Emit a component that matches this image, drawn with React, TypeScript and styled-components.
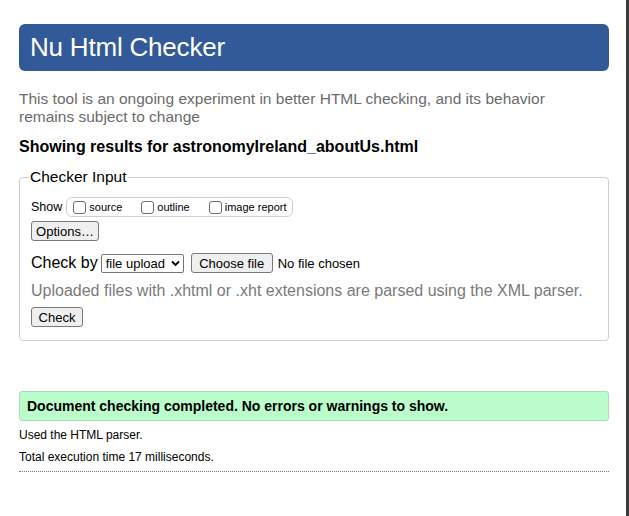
import React from "react";
import styled, { createGlobalStyle } from "styled-components";

const Global = createGlobalStyle`
  html, body { margin: 0; padding: 0; background: #fff; }
  body { font-family: "Liberation Sans", Arial, sans-serif; color: #000; }
`;

const Page = styled.div`
  box-sizing: border-box;
  width: 629px;
  min-height: 516px;
  padding: 24px 20px 0 19px;
  border-right: 3px solid #3a3a3a;
  font-family: "Liberation Sans", Arial, sans-serif;
`;

const Content = styled.div`
  width: 590px;
`;

const Header = styled.h1`
  margin: 0;
  height: 47px;
  box-sizing: border-box;
  background: #335a98;
  border-radius: 6px;
  color: #fff;
  font-weight: normal;
  font-size: 26px;
  line-height: 47px;
  padding-left: 11px;
  letter-spacing: -0.2px;
`;

const Intro = styled.p`
  margin: 19px 0 0;
  max-width: 560px;
  color: #6b6b6b;
  font-size: 15.5px;
  line-height: 18px;
`;

const ResultsFor = styled.h2`
  margin: 12px 0 0;
  font-size: 16px;
  line-height: 18px;
  font-weight: bold;
`;

const Fieldset = styled.fieldset`
  margin: 12px 0 0;
  padding: 4px 11px 13px 11px;
  border: 1px solid #cfcfcf;
  border-radius: 4px;
`;

const Legend = styled.legend`
  font-size: 15.5px;
  padding: 0 1px;
  margin-left: -2px;
`;

const ShowRow = styled.div`
  display: flex;
  align-items: center;
  font-size: 12.5px;
  gap: 4px;
  margin-top: 7px;
`;

const ShowGroup = styled.div`
  display: flex;
  align-items: center;
  border: 1px solid #cfcfcf;
  border-radius: 6px;
  height: 18px;
  padding: 0 5px 0 6px;
  gap: 19px;
  font-size: 11px;
`;

const CheckLabel = styled.label`
  display: flex;
  align-items: center;
  gap: 3px;
`;

const Box = styled.span`
  display: inline-block;
  width: 11px;
  height: 11px;
  border: 1px solid #6d6d6d;
  border-radius: 3px;
  background: #fff;
`;

const Button = styled.button<{ $w?: number }>`
  font-family: "Liberation Sans", Arial, sans-serif;
  font-size: 13px;
  height: 20px;
  ${(p) => (p.$w ? `width: ${p.$w}px;` : "")}
  padding: 0 3px;
  background: #efefef;
  border: 1px solid #7a7a7a;
  border-radius: 3px;
  color: #000;
  line-height: 1;
`;

const OptionsRow = styled.div`
  margin-top: 4px;
`;

const CheckByRow = styled.div`
  display: flex;
  align-items: center;
  margin-top: 12px;
  font-size: 16px;
`;

const Select = styled.div`
  display: flex;
  align-items: center;
  justify-content: space-between;
  margin-left: 3px;
  width: 83px;
  height: 19px;
  box-sizing: border-box;
  border: 1px solid #767676;
  border-radius: 2px;
  font-size: 13px;
  padding: 0 3px 0 4px;
`;

const FileButton = styled(Button)`
  margin-left: 7px;
  width: 82px;
`;

const NoFile = styled.span`
  font-size: 13px;
  margin-left: 5px;
`;

const Note = styled.p`
  margin: 8px 0 0;
  color: #7a7a7a;
  font-size: 16px;
  line-height: 19px;
`;

const CheckRow = styled.div`
  margin-top: 7px;
`;

const Success = styled.p`
  margin: 50px 0 0;
  height: 30px;
  box-sizing: border-box;
  background: #bbfdca;
  border: 1px solid #a8dcb4;
  border-radius: 3px;
  font-weight: bold;
  font-size: 14px;
  line-height: 28px;
  padding-left: 7px;
`;

const Small = styled.p<{ $mt: number }>`
  margin: ${(p) => p.$mt}px 0 0;
  font-size: 12px;
  line-height: 14px;
`;

const Divider = styled.hr`
  margin: 7px 0 0;
  border: 0;
  border-top: 1px dotted #777;
  height: 0;
`;

const Chevron = () => (
  <svg width="9" height="7" viewBox="0 0 9 7">
    <path d="M1 1.5 L4.5 5 L8 1.5" fill="none" stroke="#000" strokeWidth="1.8" />
  </svg>
);

export default function App() {
  return (
    <>
      <Global />
      <Page>
        <Content>
          <Header>Nu Html Checker</Header>
          <Intro>
            This tool is an ongoing experiment in better HTML checking, and its behavior
            remains subject to change
          </Intro>
          <ResultsFor>Showing results for astronomyIreland_aboutUs.html</ResultsFor>
          <Fieldset>
            <Legend>Checker Input</Legend>
            <ShowRow>
              Show
              <ShowGroup>
                <CheckLabel>
                  <Box />
                  source
                </CheckLabel>
                <CheckLabel>
                  <Box />
                  outline
                </CheckLabel>
                <CheckLabel>
                  <Box />
                  image report
                </CheckLabel>
              </ShowGroup>
            </ShowRow>
            <OptionsRow>
              <Button $w={68}>Options…</Button>
            </OptionsRow>
            <CheckByRow>
              Check by
              <Select>
                file upload
                <Chevron />
              </Select>
              <FileButton>Choose file</FileButton>
              <NoFile>No file chosen</NoFile>
            </CheckByRow>
            <Note>Uploaded files with .xhtml or .xht extensions are parsed using the XML parser.</Note>
            <CheckRow>
              <Button $w={52}>Check</Button>
            </CheckRow>
          </Fieldset>
          <Success>Document checking completed. No errors or warnings to show.</Success>
          <Small $mt={7}>Used the HTML parser.</Small>
          <Small $mt={8}>Total execution time 17 milliseconds.</Small>
          <Divider />
        </Content>
      </Page>
    </>
  );
}
